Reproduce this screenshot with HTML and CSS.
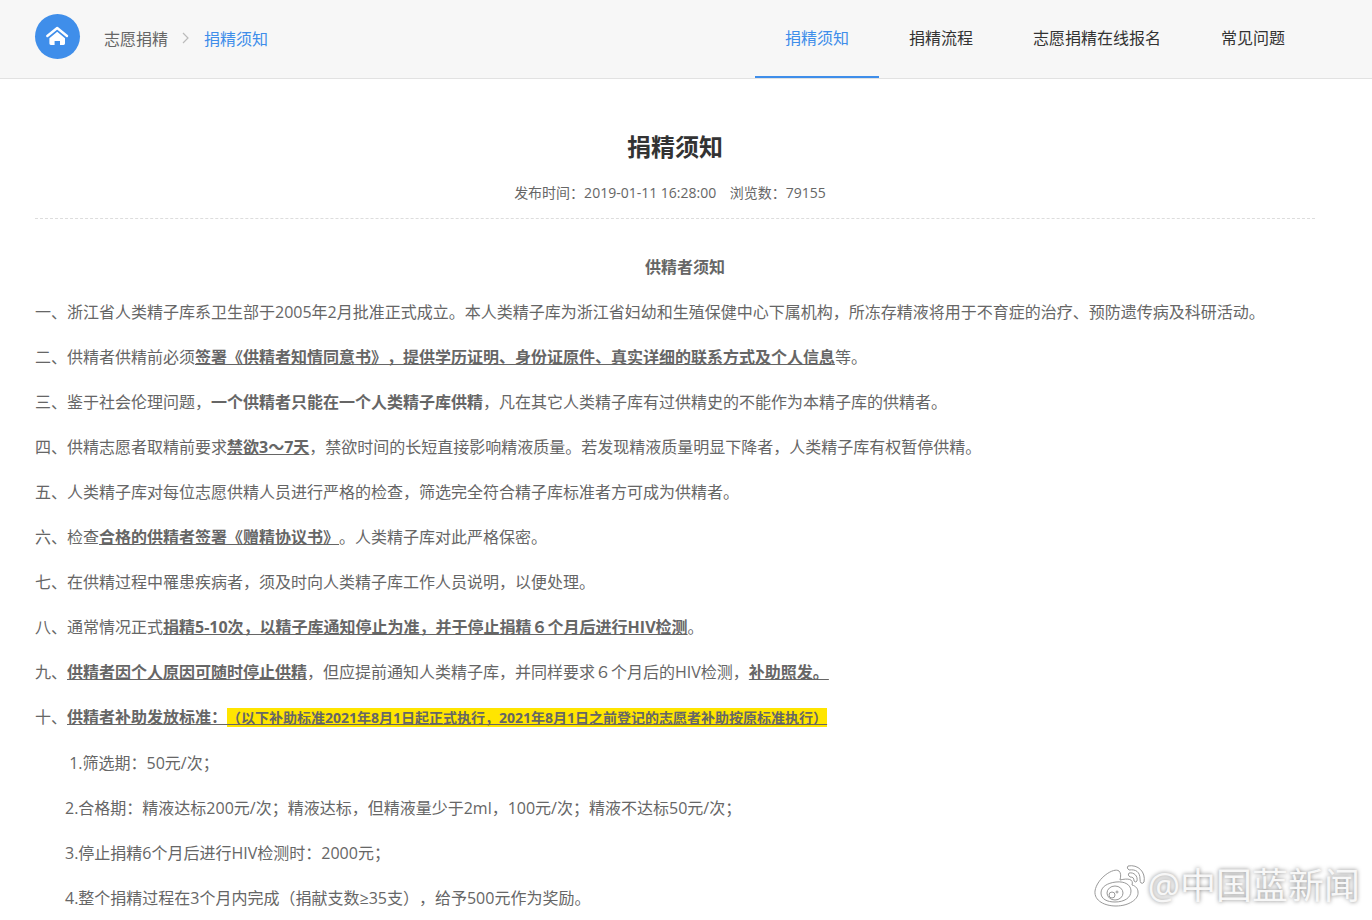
FILE: index.html
```html
<!DOCTYPE html>
<html lang="zh-CN">
<head>
    <meta charset="UTF-8">
    <meta name="viewport" content="width=device-width, initial-scale=1.0">
    <title>捐精须知</title>
    <link rel="stylesheet" href="styles.css">
</head>
<body>
    <header class="top">
        <div class="crumbs">
            <a class="home" href="#" aria-label="首页">
                <svg width="45" height="45" viewBox="0 0 45 45">
                    <path d="M12.3 22 L22.2 14 L32 22" fill="none" stroke="#fff" stroke-width="2.4" stroke-linecap="round" stroke-linejoin="round"/>
                    <path d="M22.2 17.8 L30 24.2 V29.6 Q30 31 28.6 31 H25 V27 H19.6 V31 H15.8 Q14.4 31 14.4 29.6 V24.2 Z" fill="#fff"/>
                </svg>
            </a>
            <a href="#">志愿捐精</a>
            <svg class="arrow" width="8" height="12" viewBox="0 0 8 12">
                <path d="M1 1 L6 6 L1 11" fill="none" stroke="#bbb" stroke-width="1.2"/>
            </svg>
            <a class="current" href="#">捐精须知</a>
        </div>
        <nav class="menu">
            <a class="active" href="#">捐精须知</a>
            <a href="#">捐精流程</a>
            <a href="#">志愿捐精在线报名</a>
            <a href="#">常见问题</a>
        </nav>
    </header>
    <main class="article">
        <h1>捐精须知</h1>
        <div class="meta">
            <span>发布时间：2019-01-11 16:28:00</span>
            <span>浏览数：79155</span>
        </div>
        <div class="content">
            <p class="center"><strong>供精者须知</strong></p>
            <p>一、浙江省人类精子库系卫生部于2005年2月批准正式成立。本人类精子库为浙江省妇幼和生殖保健中心下属机构，所冻存精液将用于不育症的治疗、预防遗传病及科研活动。</p>
            <p>二、供精者供精前必须<strong><u>签署《供精者知情同意书》，提供学历证明、身份证原件、真实详细的联系方式及个人信息</u></strong>等。</p>
            <p>三、鉴于社会伦理问题，<strong>一个供精者只能在一个人类精子库供精</strong>，凡在其它人类精子库有过供精史的不能作为本精子库的供精者。</p>
            <p>四、供精志愿者取精前要求<strong><u>禁欲3～7天</u></strong>，禁欲时间的长短直接影响精液质量。若发现精液质量明显下降者，人类精子库有权暂停供精。</p>
            <p>五、人类精子库对每位志愿供精人员进行严格的检查，筛选完全符合精子库标准者方可成为供精者。</p>
            <p>六、检查<strong><u>合格的供精者签署《赠精协议书》</u></strong>。人类精子库对此严格保密。</p>
            <p>七、在供精过程中罹患疾病者，须及时向人类精子库工作人员说明，以便处理。</p>
            <p>八、通常情况正式<strong><u>捐精5-10次，以精子库通知停止为准，并于停止捐精６个月后进行HIV检测</u></strong>。</p>
            <p>九、<strong><u>供精者因个人原因可随时停止供精</u></strong>，但应提前通知人类精子库，并同样要求６个月后的HIV检测，<strong><u>补助照发。</u></strong></p>
            <p>十、<strong><u>供精者补助发放标准：<mark>（以下补助标准2021年8月1日起正式执行，2021年8月1日之前登记的志愿者补助按原标准执行）</mark></u></strong></p>
            <p class="sub">&nbsp;1.筛选期：50元/次；</p>
            <p class="sub">2.合格期：精液达标200元/次；精液达标，但精液量少于2ml，100元/次；精液不达标50元/次；</p>
            <p class="sub">3.停止捐精6个月后进行HIV检测时：2000元；</p>
            <p class="sub">4.整个捐精过程在3个月内完成（捐献支数≥35支），给予500元作为奖励。</p>
        </div>
    </main>
    <div class="watermark">
        <svg width="52" height="44" viewBox="0 0 52 44">
            <g fill="#fff" stroke="#999" stroke-width="1" stroke-linejoin="round">
                <path d="M25 7 C20 3 3 14 1 27 C0 37 11 42 22 42 C35 42 45 35 44 28 C44 25 42 22 38 21 C40 15 34 14 26 16 C27 12 27 9 25 7 Z"/>
                <path d="M22 18 C31 17 37 21 37 27 C37 34 30 38 21 38 C13 38 7 35 7 29 C7 23 13 19 22 18 Z"/>
                <ellipse cx="21" cy="29" rx="8" ry="7"/>
                <circle cx="18" cy="31" r="3"/>
                <circle cx="23" cy="28" r="1"/>
                <path d="M34 2 C44 0 52 8 50 18 Q49 20 47 19 Q46 18 46 15 C46 8 42 5 35 6 Q32 4 34 2 Z"/>
                <path d="M35 9 C40 8 44 12 43 17 Q42 19 40 17 C40 14 39 13 36 13 Q33 11 35 9 Z"/>
            </g>
        </svg>
        <span>@中国蓝新闻</span>
    </div>
</body>
</html>
```

FILE: styles.css
```css
body {
    font-family: "Open Sans", "Noto Sans CJK SC", sans-serif;
    font-size: 16px;
    color: #666;
    background-color: #fff;
    margin: 0;
    text-spacing-trim: space-all;
}
a {
    color: inherit;
    text-decoration: none;
}
.top {
    display: flex;
    justify-content: space-between;
    height: 78px;
    padding: 0 57px 0 35px;
    background-color: #f7f7f7;
    border-bottom: 1px solid #e2e2e2;
}
.crumbs {
    display: flex;
    align-items: center;
    height: 76px;
}
.home {
    width: 45px;
    height: 45px;
    margin-right: 24px;
    margin-bottom: 4px;
    border-radius: 50%;
    background-color: #3f8eea;
}
.home svg {
    display: block;
}
.arrow {
    margin: 0 14px;
}
.crumbs .current {
    color: #3f8eea;
}
.menu {
    display: flex;
}
.menu a {
    padding: 0 30px;
    line-height: 76px;
    color: #333;
}
.menu .active {
    color: #3f8eea;
    border-bottom: 2px solid #3f8eea;
}
.article {
    max-width: 1280px;
    margin: 0 57px 0 35px;
    padding-top: 48px;
}
h1 {
    margin: 0;
    font-size: 24px;
    line-height: 40px;
    text-align: center;
    color: #333;
}
.meta {
    padding: 14px 0 13px;
    font-size: 14px;
    line-height: 24px;
    text-align: center;
    border-bottom: 1px dashed #ddd;
}
.meta span {
    margin-right: 10px;
}
.content {
    padding-top: 33px;
}
.content p {
    margin: 0 0 15px;
    line-height: 30px;
}
.content .center {
    text-align: center;
    text-indent: 20px;
}
.content .sub {
    padding-left: 30px;
}
.content p:last-child {
    margin-bottom: 0;
}
mark {
    font-size: 14px;
    color: inherit;
    background-color: #ffe500;
}
.watermark {
    position: absolute;
    right: 12px;
    bottom: 10px;
    display: flex;
    align-items: center;
    gap: 2px;
    font-size: 36px;
    line-height: 48px;
    color: #f7f7f7;
    text-shadow: 0 0 4px rgba(0, 0, 0, 0.5);
}
```
